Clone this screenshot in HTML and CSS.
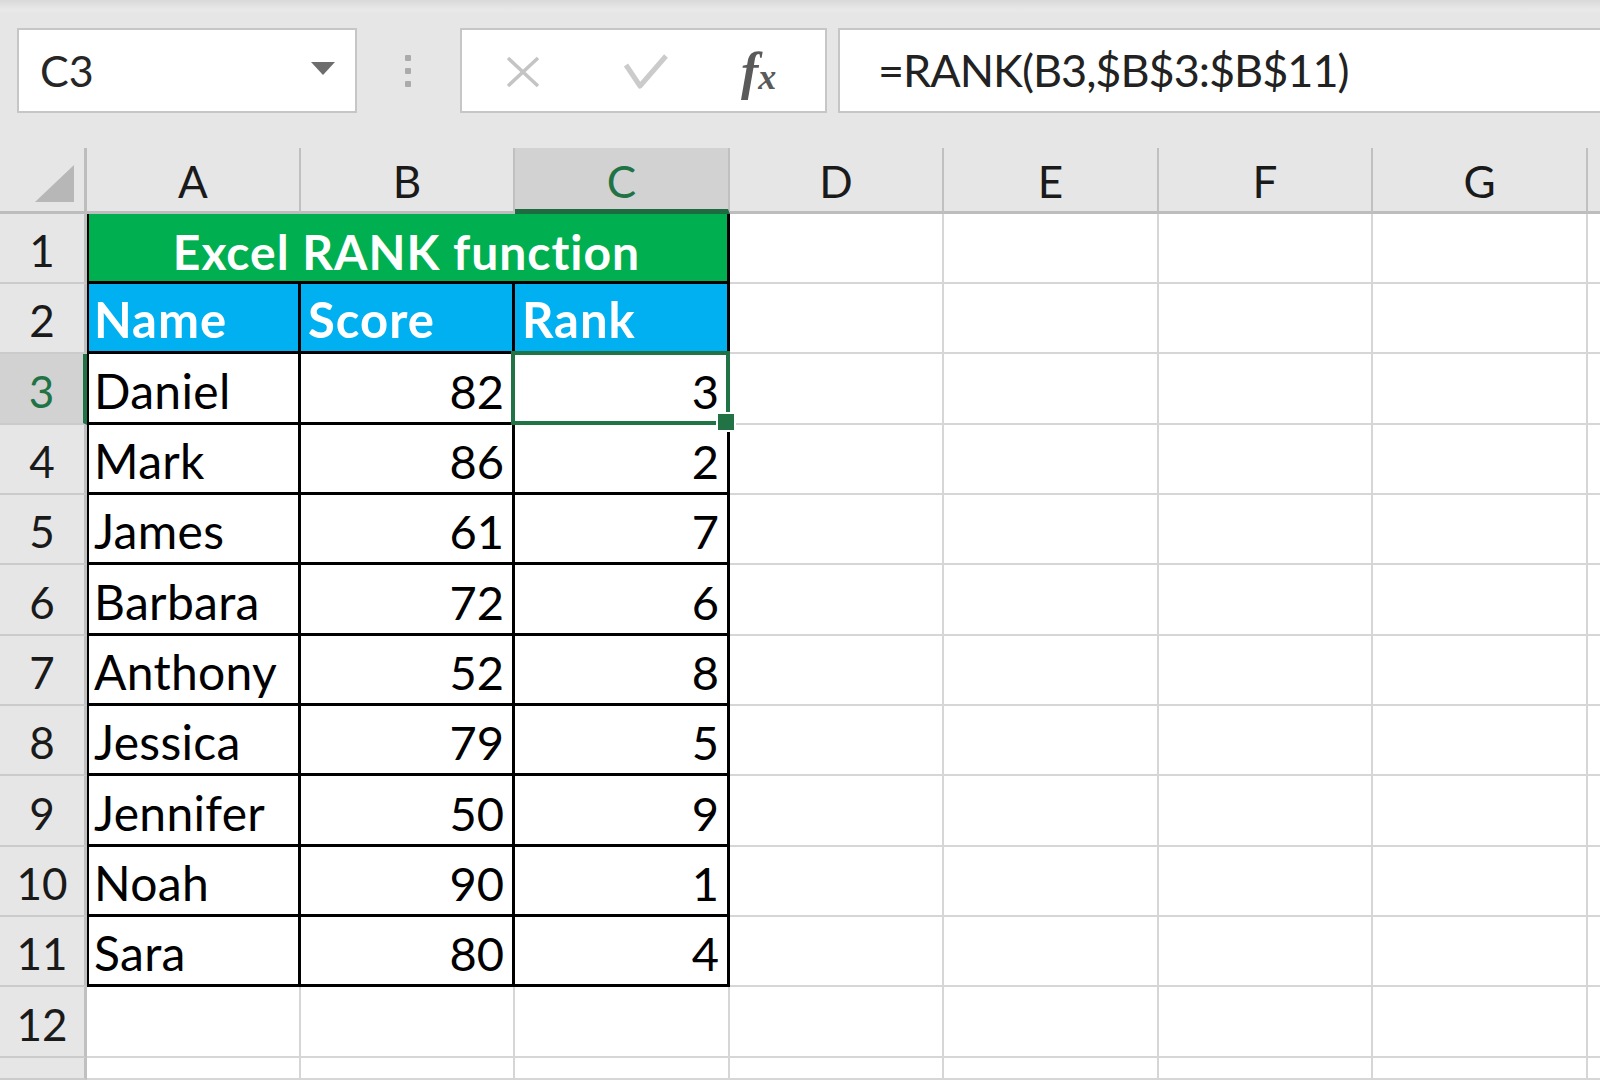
FILE: index.html
```html
<!DOCTYPE html>
<html>
<head>
<meta charset="utf-8">
<title>Excel RANK function</title>
<link rel="stylesheet" href="styles.css">
</head>
<body>
<div class="toolbar">
  <div class="namebox"><span class="ref">C3</span><span class="caret"></span></div>
  <div class="grip"><i></i><i></i><i></i></div>
  <div class="fxbox">
    <svg class="ic-x" width="36" height="32" viewBox="0 0 36 32"><path d="M3 2 L33 30 M33 2 L3 30" stroke="#c4c4c4" stroke-width="3.5" fill="none"/></svg>
    <svg class="ic-ok" width="46" height="37" viewBox="0 0 46 37"><path d="M3 12 L17 33 L43 3" stroke="#cbcbcb" stroke-width="5" fill="none" stroke-linejoin="round"/></svg>
    <span class="fx"><i class="f">f</i><i class="x">x</i></span>
  </div>
  <div class="formula">=RANK(B3,$B$3:$B$11)</div>
</div>
<div class="sheet">
  <div class="corner"><span class="tri"></span></div>
  <div class="ch">A</div><div class="ch">B</div><div class="ch sel">C</div><div class="ch">D</div><div class="ch">E</div><div class="ch">F</div><div class="ch">G</div><div class="ch"></div>

  <div class="rh">1</div>
  <div class="c t first title">Excel RANK function</div>
  <div class="c"></div><div class="c"></div><div class="c"></div><div class="c"></div><div class="c"></div>

  <div class="rh">2</div>
  <div class="c t first hd">Name</div><div class="c t hd">Score</div><div class="c t hd">Rank</div>
  <div class="c"></div><div class="c"></div><div class="c"></div><div class="c"></div><div class="c"></div>

  <div class="rh sel">3</div>
  <div class="c t first">Daniel</div><div class="c t num">82</div><div class="c t num active">3<span class="selbox"><span class="handle"></span></span></div>
  <div class="c"></div><div class="c"></div><div class="c"></div><div class="c"></div><div class="c"></div>

  <div class="rh">4</div>
  <div class="c t first">Mark</div><div class="c t num">86</div><div class="c t num">2</div>
  <div class="c"></div><div class="c"></div><div class="c"></div><div class="c"></div><div class="c"></div>

  <div class="rh">5</div>
  <div class="c t first">James</div><div class="c t num">61</div><div class="c t num">7</div>
  <div class="c"></div><div class="c"></div><div class="c"></div><div class="c"></div><div class="c"></div>

  <div class="rh">6</div>
  <div class="c t first">Barbara</div><div class="c t num">72</div><div class="c t num">6</div>
  <div class="c"></div><div class="c"></div><div class="c"></div><div class="c"></div><div class="c"></div>

  <div class="rh">7</div>
  <div class="c t first">Anthony</div><div class="c t num">52</div><div class="c t num">8</div>
  <div class="c"></div><div class="c"></div><div class="c"></div><div class="c"></div><div class="c"></div>

  <div class="rh">8</div>
  <div class="c t first">Jessica</div><div class="c t num">79</div><div class="c t num">5</div>
  <div class="c"></div><div class="c"></div><div class="c"></div><div class="c"></div><div class="c"></div>

  <div class="rh">9</div>
  <div class="c t first">Jennifer</div><div class="c t num">50</div><div class="c t num">9</div>
  <div class="c"></div><div class="c"></div><div class="c"></div><div class="c"></div><div class="c"></div>

  <div class="rh">10</div>
  <div class="c t first">Noah</div><div class="c t num">90</div><div class="c t num">1</div>
  <div class="c"></div><div class="c"></div><div class="c"></div><div class="c"></div><div class="c"></div>

  <div class="rh">11</div>
  <div class="c t first">Sara</div><div class="c t num">80</div><div class="c t num">4</div>
  <div class="c"></div><div class="c"></div><div class="c"></div><div class="c"></div><div class="c"></div>

  <div class="rh">12</div>
  <div class="c"></div><div class="c"></div><div class="c"></div><div class="c"></div><div class="c"></div><div class="c"></div><div class="c"></div><div class="c"></div>

  <div class="rh"></div>
  <div class="c"></div><div class="c"></div><div class="c"></div><div class="c"></div><div class="c"></div><div class="c"></div><div class="c"></div><div class="c"></div>
</div>
</body>
</html>
```
FILE: styles.css
```css
* { box-sizing: border-box; }
html, body { margin: 0; padding: 0; }
body {
  width: 1600px;
  height: 1080px;
  overflow: hidden;
  background: #e6e6e6;
  font-family: Lato, "Open Sans", sans-serif;
  color: #000;
}

/* ---------- formula bar ---------- */
.toolbar {
  height: 148px;
  display: flex;
  align-items: flex-start;
  padding-top: 28px;
  background: linear-gradient(#d9d9d9 0, #e9e9e9 10px, #e6e6e6 14px);
}
.namebox {
  margin-left: 17px;
  width: 340px;
  height: 85px;
  background: #fff;
  border: 2px solid #c6c6c6;
  display: flex;
  align-items: center;
  justify-content: space-between;
  padding: 0 20px 0 21px;
}
.ref { font-size: 43px; line-height: 1; color: #262626; }
.caret {
  width: 0; height: 0;
  border-left: 12px solid transparent;
  border-right: 12px solid transparent;
  border-top: 13px solid #6d6d6d;
  margin-top: -4px;
}
.grip {
  margin-left: 48px;
  margin-top: 27px;
  display: flex;
  flex-direction: column;
  gap: 7px;
}
.grip i { display: block; width: 6px; height: 6px; background: #ababab; border-radius: 1px; }
.fxbox {
  margin-left: 49px;
  width: 367px;
  height: 85px;
  background: #fff;
  border: 2px solid #c6c6c6;
  display: flex;
  align-items: center;
}
.ic-x { margin-left: 43px; margin-top: 2px; }
.ic-ok { margin-left: 82px; margin-top: 2px; }
.fx {
  margin-left: 72px;
  margin-top: 2px;
  font-family: "Liberation Serif", serif;
  font-weight: 700;
  color: #5a5a5a;
  display: flex;
  align-items: baseline;
  line-height: 1;
}
.fx .f { font-size: 52px; font-style: italic; }
.fx .x { font-size: 36px; font-style: italic; margin-left: 0; }
.formula {
  margin-left: 11px;
  flex: 1;
  height: 85px;
  background: #fff;
  border: 2px solid #c6c6c6;
  border-right: none;
  padding-left: 38px;
  display: flex;
  align-items: center;
  font-size: 45px;
  letter-spacing: -1px;
  line-height: 1;
  color: #222;
  white-space: nowrap;
}

/* ---------- sheet ---------- */
.sheet {
  height: 932px;
  display: grid;
  grid-template-columns: 87px 214px 214px 215px 214px 215px 214px 215px 1fr;
  grid-template-rows: 66px 70px 70px 71px 70px 70px 71px 70px 70px 71px 70px 70px 71px 1fr;
  overflow: hidden;
}
.corner {
  background: #e6e6e6;
  border-right: 3px solid #bdbdbd;
  border-bottom: 3px solid #bdbdbd;
  display: flex;
  align-items: flex-end;
  justify-content: flex-end;
  padding: 0 10px 9px 0;
}
.tri {
  width: 0; height: 0;
  border-left: 39px solid transparent;
  border-bottom: 37px solid #b7b7b7;
}
.ch {
  background: #e6e6e6;
  border-right: 2px solid #c0c0c0;
  border-bottom: 3px solid #bdbdbd;
  display: flex;
  justify-content: center;
  align-items: flex-end;
  padding-bottom: 8px;
  font-size: 44px;
  line-height: 1;
  color: #1a1a1a;
}
.ch.sel {
  background: #d2d2d2;
  color: #217346;
  border-bottom: 5px solid #1e6b41;
  padding-bottom: 6px;
}
.rh {
  background: #e6e6e6;
  border-right: 3px solid #c0c0c0;
  border-bottom: 2px solid #cbcbcb;
  display: flex;
  justify-content: center;
  align-items: flex-end;
  padding-bottom: 10px;
  font-size: 44px;
  line-height: 1;
  color: #1a1a1a;
}
.rh.sel {
  background: #d2d2d2;
  color: #217346;
  border-right: 4px solid #217346;
}
.c {
  background: #fff;
  border-right: 2px solid #d6d6d6;
  border-bottom: 2px solid #d6d6d6;
  display: flex;
  align-items: flex-end;
  padding: 0 8px 7px 7px;
  font-size: 48px;
  letter-spacing: 0.3px;
  line-height: 1;
  white-space: nowrap;
}
.c.t {
  border-right: 3px solid #000;
  border-bottom: 3px solid #000;
}
.c.first { box-shadow: inset 2px 0 0 #000; }
.c.num { justify-content: flex-end; letter-spacing: 0; font-size: 47px; }
.title {
  grid-column: span 3;
  justify-content: center;
  background: #00b050;
  color: #fff;
  font-weight: 700;
  font-size: 48px;
  letter-spacing: 1px;
  padding-bottom: 5px;
}
.hd {
  background: #00b0f0;
  color: #fff;
  font-weight: 700;
  font-size: 49px;
  letter-spacing: 1px;
}
.active { position: relative; z-index: 2; }
.selbox {
  position: absolute;
  left: -4px;
  top: -3px;
  right: -3px;
  bottom: -3px;
  border: 4px solid #217346;
}
.handle {
  position: absolute;
  right: -8px;
  bottom: -9px;
  width: 16px;
  height: 16px;
  background: #217346;
  box-shadow: 0 0 0 2px #fff;
}
```
